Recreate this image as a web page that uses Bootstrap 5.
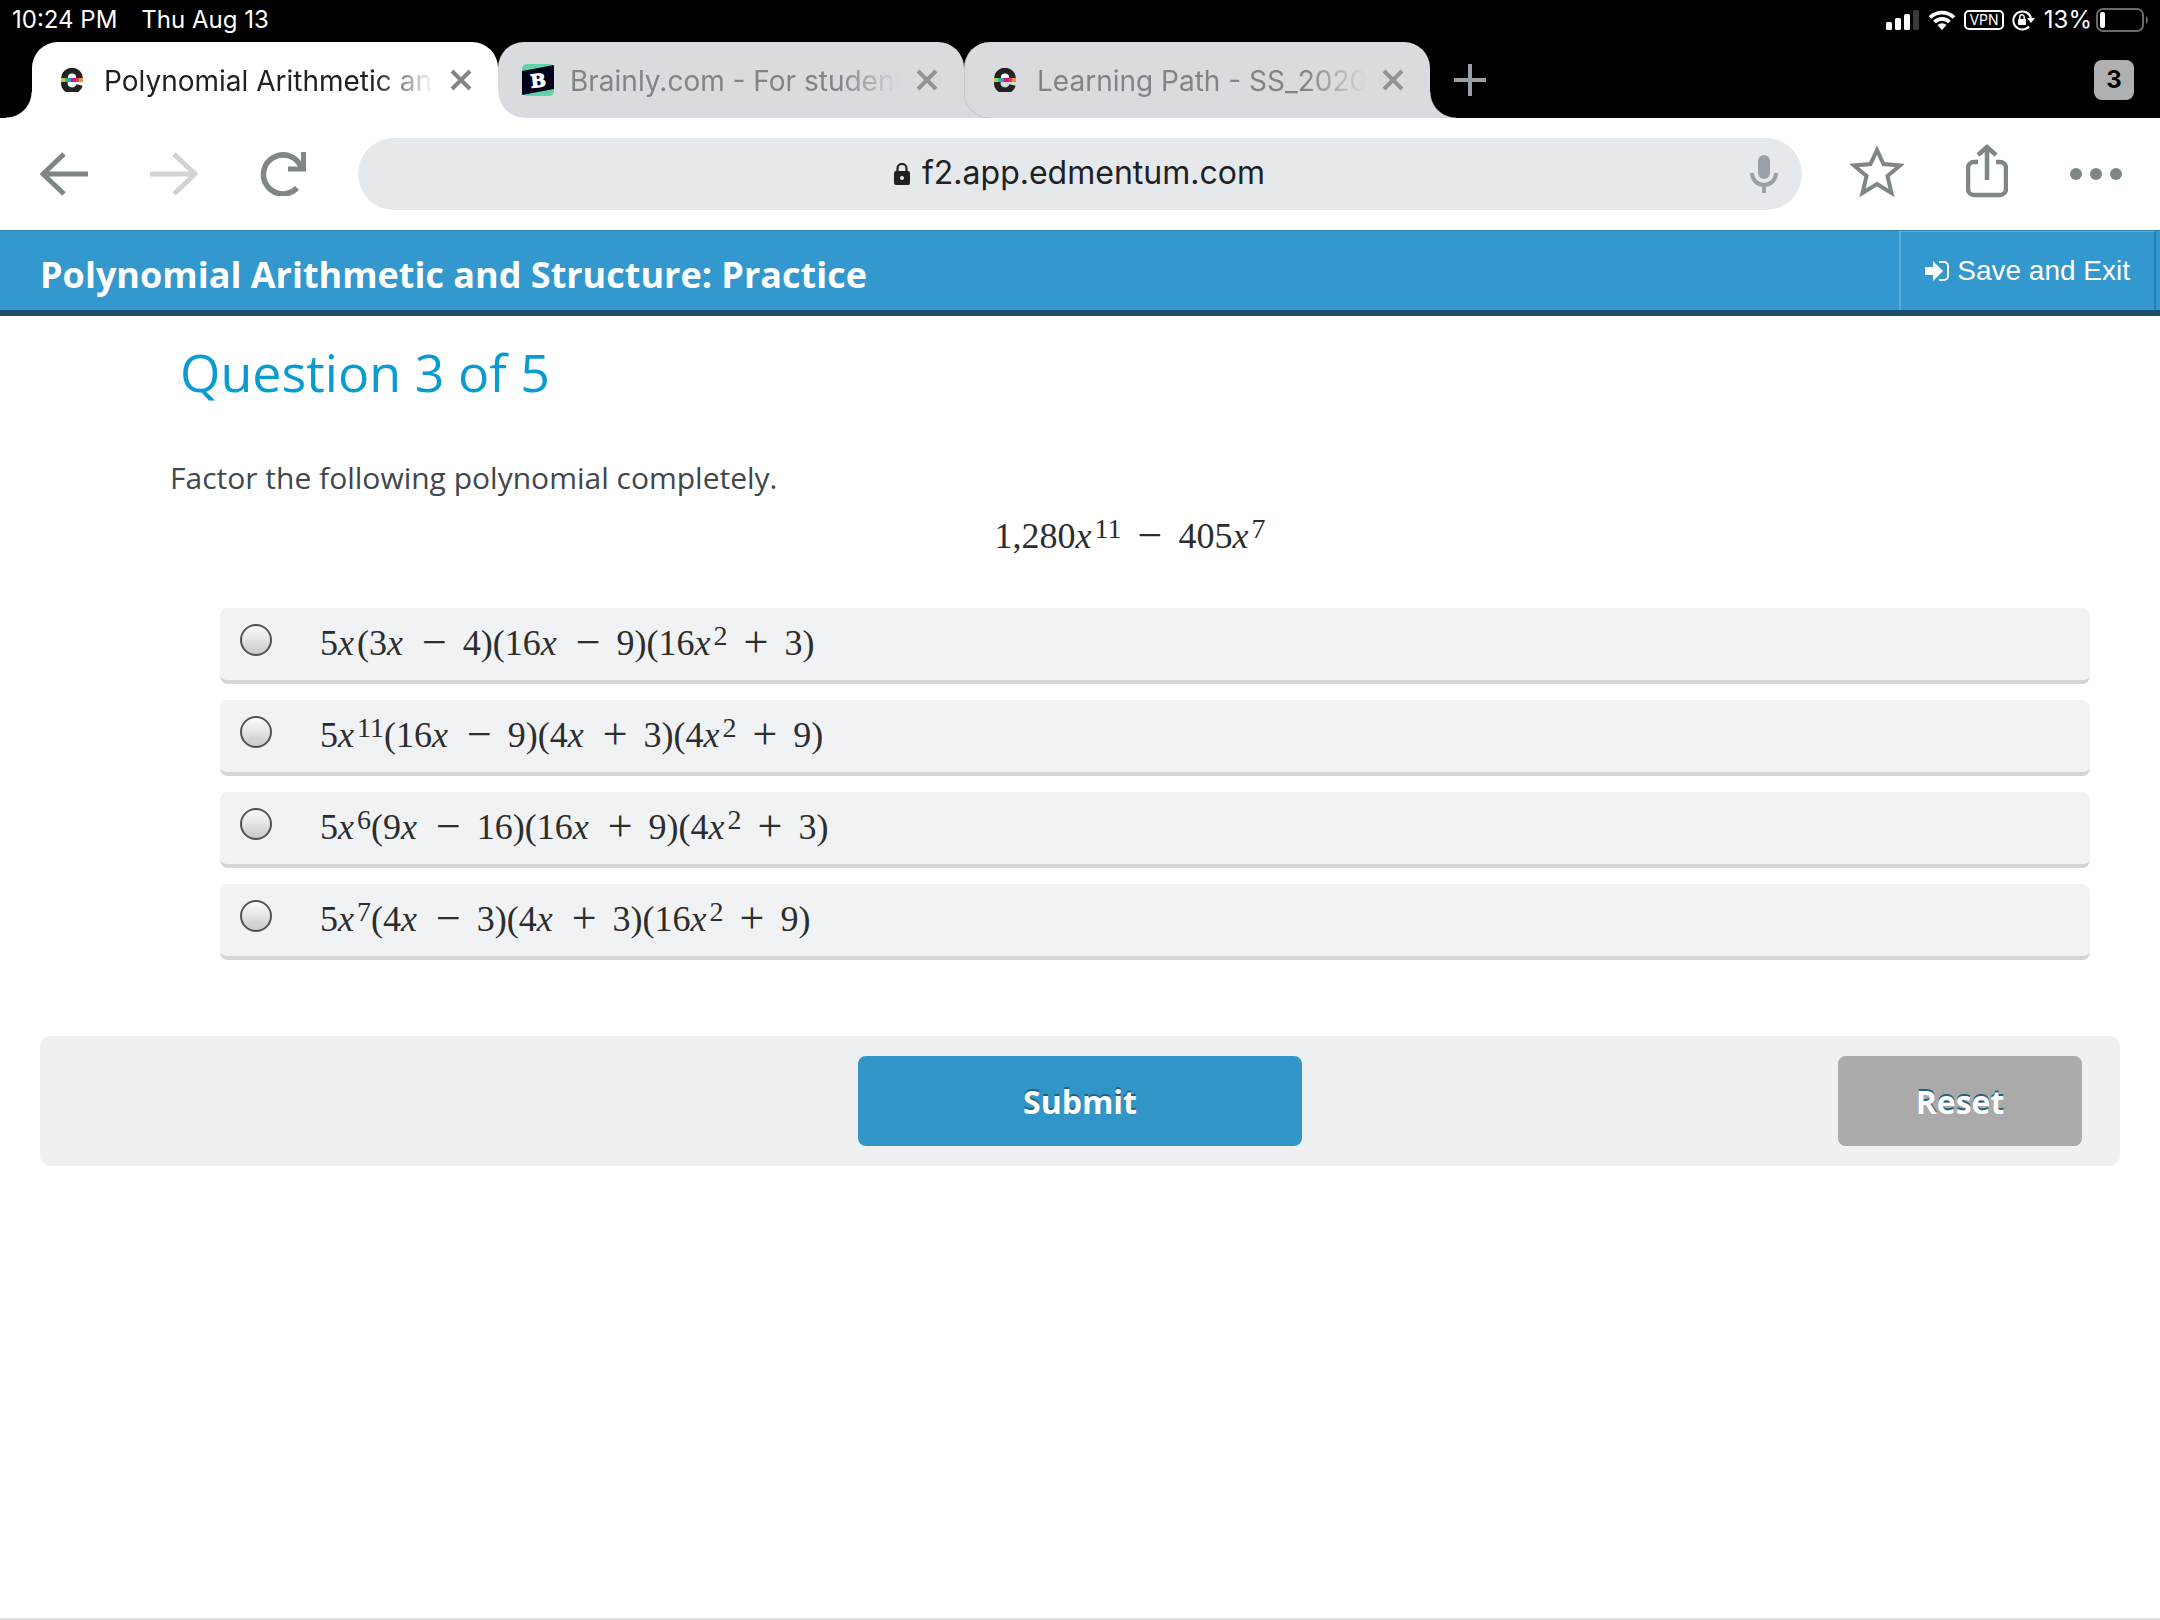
<!DOCTYPE html>
<html lang="en">
<head>
<meta charset="utf-8">
<meta name="viewport" content="width=device-width, initial-scale=1">
<title>Polynomial Arithmetic and Structure: Practice</title>
<link href="https://cdn.jsdelivr.net/npm/bootstrap@5.3.0/dist/css/bootstrap.min.css" rel="stylesheet">
<style>
  body { font-family: "Open Sans", sans-serif; color: #3f474d; background: #fff; }
  svg { display: block; flex: none; }
  button { flex: none; }
  .ui-font { font-family: Inter, sans-serif; }
  .plain-btn { background: none; border: 0; padding: 0; }

  /* device status bar */
  .status-bar { height: 42px; padding: 0 10px 2px 12px; background: #000; color: #fff; font-size: 24px; line-height: 40px; }
  .status-icons { gap: 8px; }

  /* browser tabs */
  .tab-strip { height: 76px; padding: 0 26px 0 32px; background: #000; }
  .browser-tab { position: relative; flex: 0 1 466px; min-width: 0; padding: 0 26px 0 24px; border-radius: 26px 26px 0 0; background: #dadbdf; color: #808487; font-size: 28px; line-height: 76px; }
  .browser-tab::after { content: ""; position: absolute; left: 100%; bottom: 0; width: 26px; height: 26px; background: radial-gradient(circle at 100% 0, transparent 25px, #c4c6c9 26px, #dadbdf 27px); z-index: 1; }
  .browser-tab.current { background: #fff; color: #202124; z-index: 2; }
  .browser-tab.current::after { background: radial-gradient(circle at 100% 0, transparent 25px, #fff 26px); }
  .browser-tab.current::before { content: ""; position: absolute; right: 100%; bottom: 0; width: 26px; height: 26px; background: radial-gradient(circle at 0 0, transparent 25px, #fff 26px); }
  .browser-tab + .browser-tab + .browser-tab { border-left: 1px solid #c4c6c9; }
  .tab-label { height: 76px; padding-top: 1px; color: inherit; text-decoration: none; white-space: nowrap; overflow: hidden; -webkit-mask-image: linear-gradient(to left, transparent, #000 60px); mask-image: linear-gradient(to left, transparent, #000 60px); }
  .tab-count { width: 40px; height: 40px; border: 0; border-radius: 8px; padding: 0; background: #b0b0b0; color: #000; font-size: 24px; line-height: 40px; font-weight: 700; }

  /* address row */
  .address-row { height: 112px; padding: 0 38px 0 40px; }
  .nav-icons { gap: 62px; margin-right: 52px; }
  .tool-icons { gap: 62px; margin-left: 48px; }
  .raised { margin-bottom: 6px; }
  .address-pill { height: 72px; border-radius: 36px; background: #e6e9ec; padding: 0 24px 0 56px; }
  .address-input { width: 348px; margin-left: 12px; border: 0; padding: 0 0 2px; background: none; color: #202124; font-size: 32px; line-height: 48px; }

  /* lesson */
  .lesson-bar { height: 86px; background: #3398cd; border-top: 1px solid #2c86b0; border-bottom: 6px solid #1c4e6b; padding: 0 4px 0 40px; }
  .lesson-title { font-size: 36px; line-height: 48px; font-weight: 700; color: #fff; }
  .save-link { border: 2px solid #58aede; border-width: 1px 2px 0 2px; border-right-color: #267fb2; padding: 0 24px; gap: 8px; color: #fff; font-family: "Liberation Sans", sans-serif; font-size: 28px; }
  .lesson-body { padding: 24px 70px 0 170px; }
  .question-title { font-size: 52px; line-height: 64px; font-weight: 400; color: #0a9bd0; margin: 0; padding-left: 10px; }
  .prompt { font-size: 30px; line-height: 40px; margin: 54px 0 0; }
  .math { font-family: "Liberation Serif", serif; font-size: 36px; line-height: 48px; color: #2b2d2f; white-space: nowrap; }
  .math i { padding-right: 3px; }
  .math sup { font-size: 28px; line-height: 0; top: 0; vertical-align: 10px; }
  .math b { font-size: 44px; line-height: 0; vertical-align: -2px; font-weight: 400; margin: 0 16px; }
  .equation { margin: 14px 0 48px; }
  .choices { gap: 16px; margin-left: 50px; }
  .choice { height: 76px; border-radius: 8px; border-bottom: 4px solid #d2d4d6; background: #f1f2f4; padding: 0 20px 8px; }
  .choice .math { padding-top: 6px; }
  .choice-radio { appearance: none; flex: none; width: 32px; height: 32px; margin: 0 48px 0 0; border: 2px solid #505254; border-radius: 50%; background: linear-gradient(#fbfbfb, #c9cbcb); }
  .choice-radio:checked { background: radial-gradient(circle, #333 7px, #e4e4e4 8px); }
  .action-bar { display: grid; grid-template-columns: 1fr auto 1fr; margin: 76px 40px 0; padding: 20px 38px; border-radius: 10px; background: #eff0f2; }
  .action-btn { height: 90px; border: 0; border-radius: 8px; padding: 2px 0 0; color: #fff; font-size: 32px; font-weight: 700; text-shadow: 0 -2px 0 #1f6280; }
  .submit-btn { grid-column: 2; width: 444px; background: #3195c8; }
  .reset-btn { width: 244px; background: #aaa; }
  .page-end { border-bottom: 2px solid #dcdee0; }
</style>
</head>
<body class="min-vh-100 d-flex flex-column">

<svg width="0" height="0" class="position-absolute" aria-hidden="true">
  <symbol id="close" viewBox="0 0 22 22"><path d="M2 2L20 20M20 2L2 20" stroke="currentColor" stroke-width="4" fill="none"/></symbol>
  <symbol id="edm" viewBox="0 0 22 24">
    <path d="M3.500 11V10A7.500 7 0 0 1 18.500 10V11M3.500 13V14A7.500 7 0 0 0 18.500 17" fill="none" stroke="#222" stroke-width="6.500"/>
    <ellipse cx="11" cy="9" rx="4" ry="3.500" fill="#fff"/>
    <rect x="0" y="10" width="4" height="4" fill="#b5cf3a"/><rect x="4" y="10" width="3" height="4" fill="#3bb58a"/><rect x="7" y="10" width="3" height="4" fill="#2f9fd0"/><rect x="10" y="10" width="5" height="4" fill="#d4147f"/><rect x="15" y="10" width="3" height="4" fill="#e8452f"/><rect x="18" y="10" width="4" height="4" fill="#f08a3c"/>
  </symbol>
</svg>

<header>
  <div class="status-bar ui-font d-flex justify-content-between align-items-center">
    <div class="d-flex"><span>10:24 PM</span><span class="ms-4">Thu Aug 13</span></div>
    <div class="status-icons d-flex align-items-center">
      <svg width="34" height="22" viewBox="0 0 34 22"><rect x="0" y="13" width="6" height="8" rx="1.500" fill="#fff"/><rect x="9" y="9" width="6" height="12" rx="1.500" fill="#fff"/><rect x="18" y="5" width="6" height="16" rx="1.500" fill="#fff"/><rect x="27" y="1" width="6" height="20" rx="1.500" fill="#3a3a3a"/></svg>
      <svg width="28" height="22" viewBox="0 0 28 22"><path d="M2 8.500A17 17 0 0 1 26 8.500M6.500 13A10.500 10.500 0 0 1 21.500 13" fill="none" stroke="#fff" stroke-width="3.800"/><path d="M14 21l-4.500-5a6.500 6.500 0 0 1 9 0z" fill="#fff"/></svg>
      <svg width="40" height="22" viewBox="0 0 40 22"><rect x="1" y="2" width="38" height="18" rx="4" fill="none" stroke="#fff" stroke-width="2"/><text x="20" y="16" font-size="14" fill="#fff" text-anchor="middle">VPN</text></svg>
      <svg width="24" height="22" viewBox="0 0 24 22"><path d="M17 17.500A9 9 0 1 1 19 9" fill="none" stroke="#fff" stroke-width="2"/><path d="M15 9h8l-4 5z" fill="#fff"/><rect x="6" y="10" width="8" height="6" rx="1" fill="#fff"/><path d="M7.800 10V8a2.200 2.200 0 0 1 4.400 0v2" fill="none" stroke="#fff" stroke-width="1.500"/></svg>
      <div class="d-flex align-items-center"><span class="me-1">13%</span>
      <svg width="54" height="24" viewBox="0 0 54 24"><rect x="1" y="1" width="46" height="22" rx="6" fill="none" stroke="#6a6a6a" stroke-width="2"/><rect x="4" y="4" width="5" height="16" rx="2" fill="#fff"/><path d="M50 8a5 5 0 0 1 0 8z" fill="#6a6a6a"/></svg></div>
    </div>
  </div>

  <nav class="tab-strip ui-font d-flex align-items-center" aria-label="Browser tabs">
    <div class="browser-tab current d-flex align-items-center">
      <svg width="32" height="24" class="me-3"><use href="#edm"/></svg>
      <a href="#" class="tab-label flex-grow-1">Polynomial Arithmetic and</a>
      <button class="plain-btn ms-3" aria-label="Close tab"><svg width="22" height="22" color="#808487"><use href="#close"/></svg></button>
    </div>
    <div class="browser-tab d-flex align-items-center">
      <svg width="32" height="32" viewBox="0 0 32 32" class="me-3"><rect width="32" height="32" rx="5" fill="#60d3aa"/><path d="M0 7L32 1V25L0 31z" fill="#02031a"/><text x="16" y="23" transform="rotate(-6 16 16)" text-anchor="middle" font-family="DejaVu Serif, serif" font-weight="700" font-size="18" fill="#fff" stroke="#fff">B</text></svg>
      <a href="#" class="tab-label flex-grow-1">Brainly.com - For students</a>
      <button class="plain-btn ms-3" aria-label="Close tab"><svg width="22" height="22" color="#919496"><use href="#close"/></svg></button>
    </div>
    <div class="browser-tab d-flex align-items-center">
      <svg width="32" height="24" class="me-3"><use href="#edm"/></svg>
      <a href="#" class="tab-label flex-grow-1">Learning Path - SS_2020_</a>
      <button class="plain-btn ms-3" aria-label="Close tab"><svg width="22" height="22" color="#919496"><use href="#close"/></svg></button>
    </div>
    <button class="plain-btn ms-4" aria-label="New tab"><svg width="32" height="32" viewBox="0 0 32 32"><path d="M16 0V32M0 16H32" stroke="#9aa0a6" stroke-width="4"/></svg></button>
    <button class="tab-count ms-auto">3</button>
  </nav>

  <div class="address-row ui-font d-flex align-items-center">
    <div class="nav-icons d-flex align-items-center">
      <button class="plain-btn" aria-label="Back"><svg width="48" height="44" viewBox="0 0 48 44"><path d="M24 2L3 22L24 42M3 22H48" fill="none" stroke="#7f8688" stroke-width="5"/></svg></button>
      <button class="plain-btn" aria-label="Forward" disabled><svg width="48" height="44" viewBox="0 0 48 44"><path d="M24 2L45 22L24 42M45 22H0" fill="none" stroke="#d2d3d4" stroke-width="5"/></svg></button>
      <button class="plain-btn" aria-label="Reload"><svg width="46" height="44" viewBox="0 0 46 44"><path d="M37 36A19.500 19.500 0 1 1 41 15" fill="none" stroke="#7f8688" stroke-width="5.500"/><path d="M43.500 0V17H28" fill="none" stroke="#7f8688" stroke-width="5"/></svg></button>
    </div>
    <div class="address-pill flex-grow-1 d-flex align-items-center">
      <div class="flex-grow-1 d-flex justify-content-center align-items-center">
        <svg width="16" height="22" viewBox="0 0 16 22"><rect y="8" width="16" height="14" rx="2" fill="#202124"/><path d="M3.500 9V5.500a4.500 4.500 0 0 1 9 0V9" fill="none" stroke="#202124" stroke-width="2.200"/><circle cx="8" cy="15" r="2" fill="#e6e9ec"/></svg>
        <input class="address-input" type="text" value="f2.app.edmentum.com" aria-label="Address">
      </div>
      <button class="plain-btn" aria-label="Voice search"><svg width="28" height="40" viewBox="0 0 28 40"><rect x="8" y="1" width="12" height="24" rx="6" fill="#9aa0aa"/><path d="M2 19a12 12 0 0 0 24 0M14 31v8" fill="none" stroke="#9aa0a6" stroke-width="4"/></svg></button>
    </div>
    <div class="tool-icons d-flex align-items-center">
      <button class="plain-btn raised" aria-label="Bookmark"><svg width="54" height="52" viewBox="0 0 54 52"><path d="M27 5L33.500 19L50 20.500L37.500 31L41.500 48L27 39L12.500 48L16.500 31L4 20.500L20.500 19z" fill="none" stroke="#7f8688" stroke-width="4"/></svg></button>
      <button class="plain-btn raised" aria-label="Share"><svg width="42" height="54" viewBox="0 0 42 54"><path d="M12 18H8a6 6 0 0 0-6 6V45a6 6 0 0 0 6 6H34a6 6 0 0 0 6-6V24a6 6 0 0 0-6-6H30M21 36V3M12 11L21 3L30 11" fill="none" stroke="#7f8688" stroke-width="4.500"/></svg></button>
      <button class="plain-btn" aria-label="Menu"><svg width="52" height="12" viewBox="0 0 52 12" fill="#7f8688"><circle cx="6" cy="6" r="6"/><circle cx="26" cy="6" r="6"/><circle cx="46" cy="6" r="6"/></svg></button>
    </div>
  </div>
</header>

<div class="lesson-bar d-flex justify-content-between">
  <h1 class="lesson-title m-0 pt-2 align-self-center">Polynomial Arithmetic and Structure: Practice</h1>
  <a href="#" class="save-link d-flex align-items-center text-decoration-none">
    <svg width="24" height="20" viewBox="0 0 24 20"><path d="M0 6h8V0l10 10L8 20v-6H0z" fill="#fff"/><path d="M14 1h5a4 4 0 0 1 4 4v10a4 4 0 0 1-4 4h-5" fill="none" stroke="#fff" stroke-width="2"/></svg>
    <span>Save and Exit</span>
  </a>
</div>

<main class="page-end flex-grow-1">
  <form>
    <div class="lesson-body">
      <h2 class="question-title">Question 3 of 5</h2>
      <p class="prompt">Factor the following polynomial completely.</p>
      <div class="equation math text-center">1,280<i>x</i><sup>11</sup><b>−</b>405<i>x</i><sup>7</sup></div>
      <div class="choices d-flex flex-column">
        <label class="choice d-flex align-items-center"><input class="choice-radio" type="radio" name="answer"><span class="math">5<i>x</i>(3<i>x</i><b>−</b>4)(16<i>x</i><b>−</b>9)(16<i>x</i><sup>2</sup><b>+</b>3)</span></label>
        <label class="choice d-flex align-items-center"><input class="choice-radio" type="radio" name="answer"><span class="math">5<i>x</i><sup>11</sup>(16<i>x</i><b>−</b>9)(4<i>x</i><b>+</b>3)(4<i>x</i><sup>2</sup><b>+</b>9)</span></label>
        <label class="choice d-flex align-items-center"><input class="choice-radio" type="radio" name="answer"><span class="math">5<i>x</i><sup>6</sup>(9<i>x</i><b>−</b>16)(16<i>x</i><b>+</b>9)(4<i>x</i><sup>2</sup><b>+</b>3)</span></label>
        <label class="choice d-flex align-items-center"><input class="choice-radio" type="radio" name="answer"><span class="math">5<i>x</i><sup>7</sup>(4<i>x</i><b>−</b>3)(4<i>x</i><b>+</b>3)(16<i>x</i><sup>2</sup><b>+</b>9)</span></label>
      </div>
    </div>
    <div class="action-bar">
      <button type="button" class="action-btn submit-btn">Submit</button>
      <button type="reset" class="action-btn reset-btn ms-auto">Reset</button>
    </div>
  </form>
</main>

<script src="https://cdn.jsdelivr.net/npm/bootstrap@5.3.0/dist/js/bootstrap.bundle.min.js"></script>
</body>
</html>
